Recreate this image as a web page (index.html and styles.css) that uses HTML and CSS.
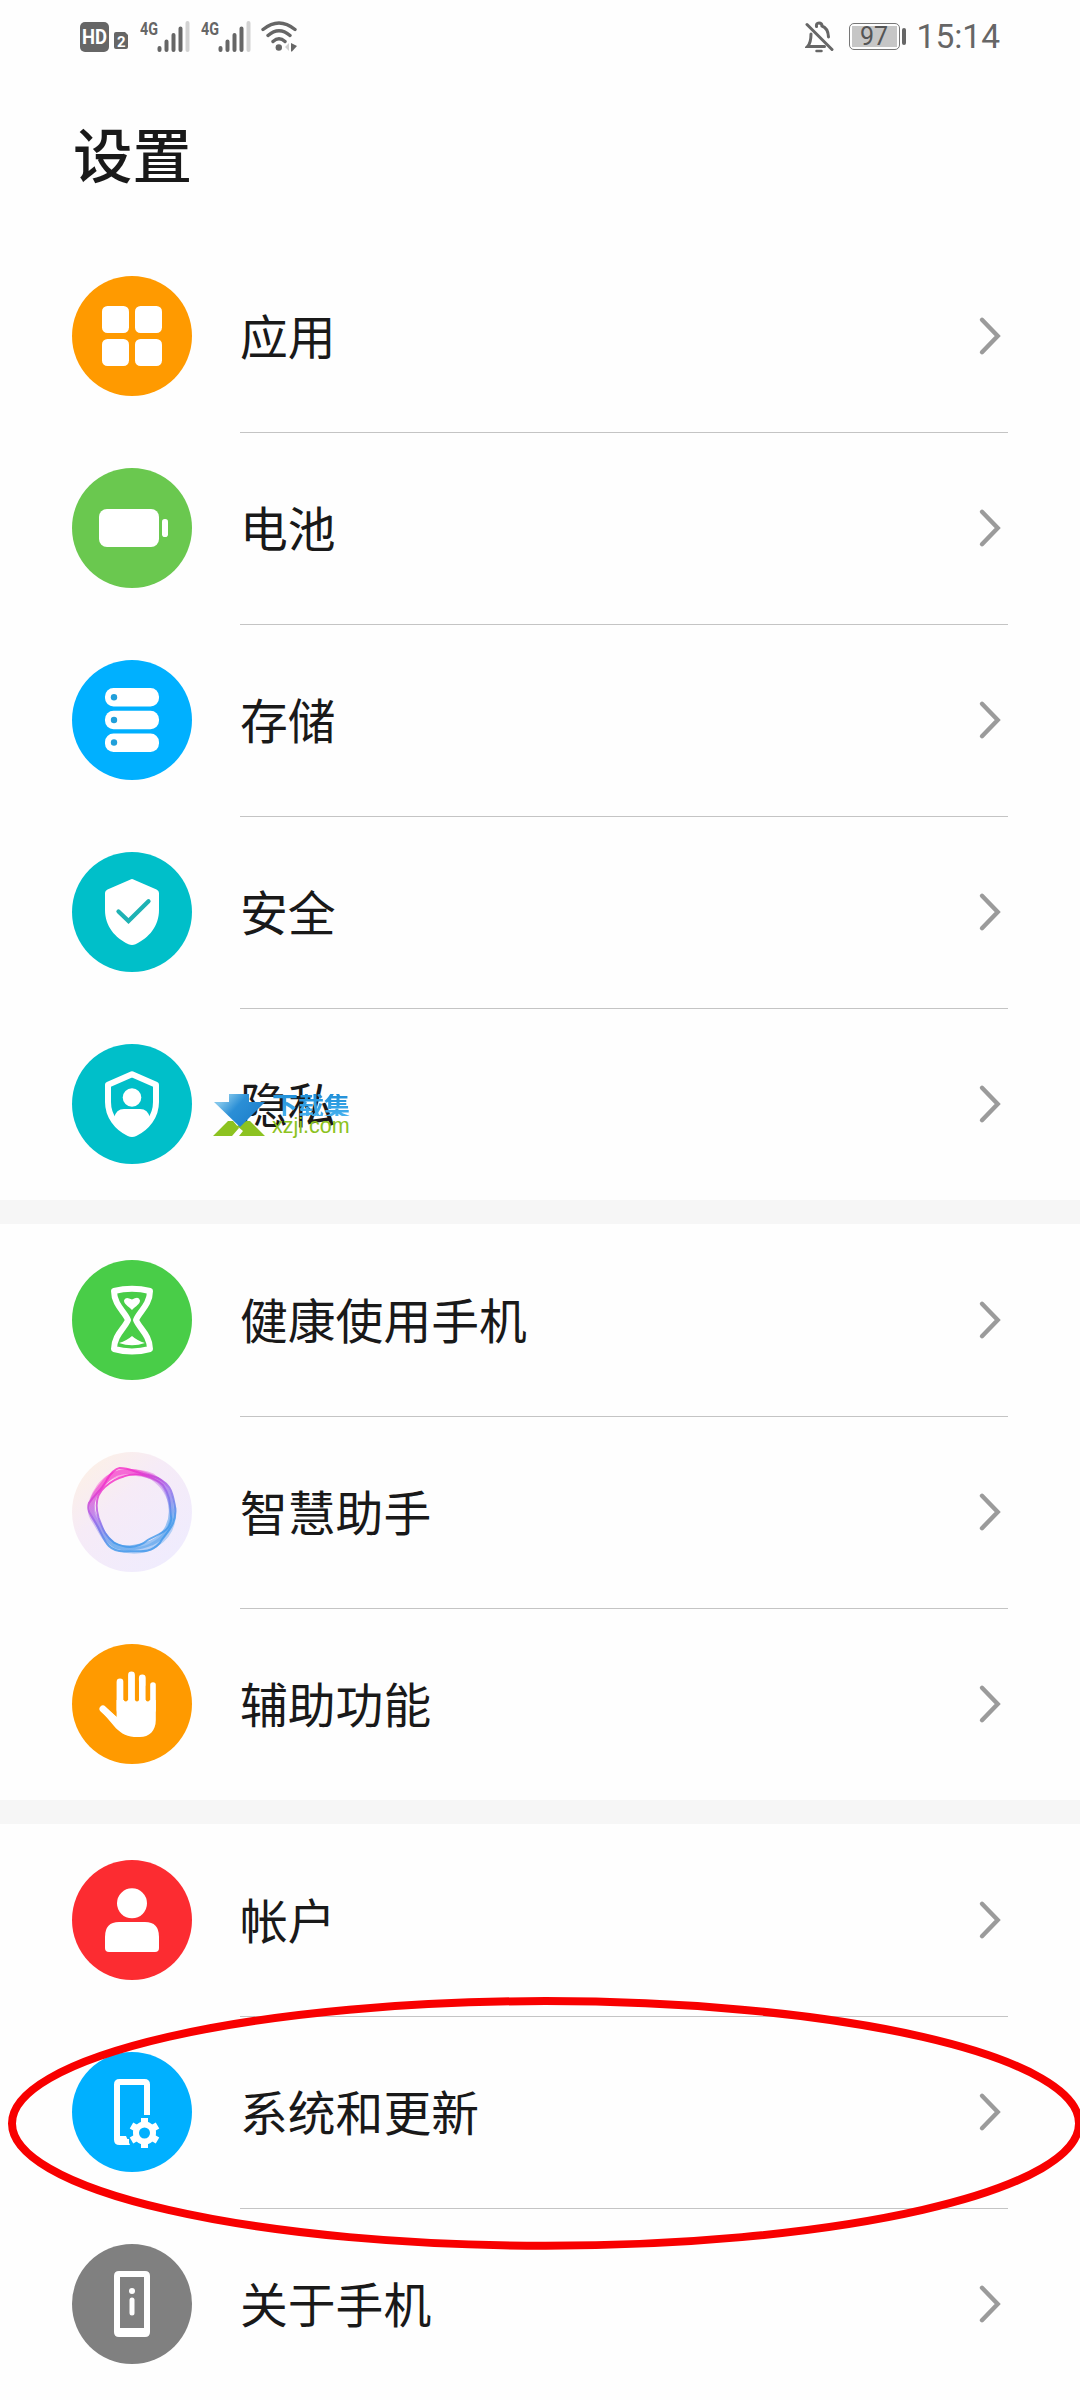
FILE: index.html
```html
<!DOCTYPE html>
<html lang="zh-CN">
<head>
<meta charset="utf-8">
<title>设置</title>
<link rel="stylesheet" href="styles.css">
</head>
<body>
<svg class="defs" width="0" height="0" aria-hidden="true">
  <defs>
    <linearGradient id="ring" x1="0.2" y1="0" x2="0.65" y2="1">
      <stop offset="0.1" stop-color="#f52bc8"/><stop offset="0.45" stop-color="#9a63ea"/><stop offset="0.8" stop-color="#3f97ea"/>
    </linearGradient>
    <linearGradient id="orb" x1="0" y1="0.1" x2="0.8" y2="1">
      <stop offset="0" stop-color="#fdf1e4"/><stop offset="0.4" stop-color="#f6ebf7"/><stop offset="1" stop-color="#efecfe"/>
    </linearGradient>
    <linearGradient id="arrow" x1="0" y1="0" x2="1" y2="0.6">
      <stop offset="0.2" stop-color="#7fc4ea"/><stop offset="0.5" stop-color="#2b8fd6"/><stop offset="1" stop-color="#1d7fcb"/>
    </linearGradient>
    <symbol id="signal" viewBox="0 0 50 32">
      <text class="net" x="0" y="15" textLength="18" lengthAdjust="spacingAndGlyphs">4G</text>
      <path class="bars" d="M19.500 28v2M26.500 21.500v8.500M33.500 15v15M40.500 8.500v21.500"/>
      <path class="bars faint" d="M47.500 3v27"/>
    </symbol>
    <symbol id="chevron" viewBox="0 0 24 40"><path d="M4 3.800 19.700 20 4 36.200" fill="none" stroke="#9b9b9b" stroke-width="4.400" stroke-linecap="round"/></symbol>
  </defs>
</svg>

<header class="status">
  <div class="status-left">
    <svg class="hd" width="50" height="32" viewBox="0 0 50 32">
      <rect x="1" y="2" width="29" height="30" rx="5" fill="#666"/>
      <text x="3" y="24" class="hd-text" textLength="25" lengthAdjust="spacingAndGlyphs">HD</text>
      <path d="M37 12h9l3 3v12a2 2 0 0 1-2 2H37a2 2 0 0 1-2-2V14a2 2 0 0 1 2-2z" fill="#666"/>
      <text x="38" y="27" class="sim-text">2</text>
    </svg>
    <svg class="sig" width="50" height="32"><use href="#signal"/></svg>
    <svg class="sig" width="50" height="32"><use href="#signal"/></svg>
    <svg class="wifi" width="40" height="32" viewBox="0 0 40 32">
      <path d="M3 9.500Q19 -3.500 35 9.500M8 15.500Q19 6 30 15.500M13 21.500Q19 16 25 21.500" fill="none" stroke="#666" stroke-width="3.400" stroke-linecap="round"/>
      <circle cx="18.800" cy="27.500" r="3.200" fill="#666"/>
      <path d="M31 23l6 3-5 5.500h-1z" fill="#666"/><path d="M29 23l-4 4 4 4z" fill="#d0d0d0"/>
    </svg>
  </div>
  <div class="status-right">
    <svg class="bell" width="30" height="34" viewBox="0 0 30 34" fill="none" stroke="#666" stroke-width="3" stroke-linecap="round">
      <path d="M11.500 6.500Q11 3 14 3t3 3q6 2 6.500 11M6 14q0 9-3.500 12.500H19.500"/>
      <path d="M2 4.500 27 29.500"/><path d="M11.500 31h5" stroke-width="2.500"/>
    </svg>
    <div class="battery"><span class="level">97</span></div>
    <time class="clock">15:14</time>
  </div>
</header>

<h1 class="title">设置</h1>

<main>
  <section class="group">
    <a class="row">
      <svg class="icon" viewBox="0 0 120 120"><circle cx="60" cy="60" r="60" fill="#ff9a00"/>
        <g fill="#fff"><rect x="30" y="30" width="27" height="27" rx="5.500"/><rect x="63" y="30" width="27" height="27" rx="5.500"/><rect x="30" y="63" width="27" height="27" rx="5.500"/><rect x="63" y="63" width="27" height="27" rx="5.500"/></g></svg>
      <span class="body"><span class="label">应用</span><svg class="go"><use href="#chevron"/></svg></span>
    </a>
    <a class="row">
      <svg class="icon" viewBox="0 0 120 120"><circle cx="60" cy="60" r="60" fill="#6ac84f"/>
        <rect x="27" y="41" width="60" height="38" rx="8" fill="#fff"/><rect x="90" y="51" width="6" height="18" rx="2.800" fill="#fff"/></svg>
      <span class="body"><span class="label">电池</span><svg class="go"><use href="#chevron"/></svg></span>
    </a>
    <a class="row">
      <svg class="icon" viewBox="0 0 120 120"><circle cx="60" cy="60" r="60" fill="#00b0ff"/>
        <g fill="#fff"><rect x="33" y="28" width="54" height="18.500" rx="8.500"/><rect x="33" y="50.700" width="54" height="18.500" rx="8.500"/><rect x="33" y="73.400" width="54" height="18.500" rx="8.500"/></g>
        <g fill="#209fda"><circle cx="42" cy="37.300" r="3.200"/><circle cx="42" cy="60" r="3.200"/><circle cx="42" cy="82.500" r="3.200"/></g></svg>
      <span class="body"><span class="label">存储</span><svg class="go"><use href="#chevron"/></svg></span>
    </a>
    <a class="row">
      <svg class="icon" viewBox="0 0 120 120"><circle cx="60" cy="60" r="60" fill="#00bfc9"/>
        <path d="M58 27.700Q60 26.500 62 27.700L84.500 37.500Q87 38.500 87 41V58C87 74 77 86 63.500 92.200Q60 93.600 56.500 92.200C43 86 33 74 33 58V41Q33 38.500 35.500 37.500Z" fill="#fff"/>
        <path d="M46.500 59.500 56.500 69 76.500 49.300" fill="none" stroke="#1eb2b4" stroke-width="4.300" stroke-linecap="round"/></svg>
      <span class="body"><span class="label">安全</span><svg class="go"><use href="#chevron"/></svg></span>
    </a>
    <a class="row">
      <svg class="icon" viewBox="0 0 120 120"><circle cx="60" cy="60" r="60" fill="#00bfc9"/>
        <path d="M60 30.300 84 40.700V58C84 72 75 83.500 63 89.200Q60 90.600 57 89.200C45 83.500 36 72 36 58V40.700Z" fill="none" stroke="#fff" stroke-width="6" stroke-linejoin="round"/>
        <circle cx="60" cy="53.500" r="9.300" fill="#fff"/><path d="M42 74Q44 65 52 65H68Q76 65 78 74L79 76 63 90H57L41 76Z" fill="#fff"/></svg>
      <span class="body"><span class="label">隐私</span><svg class="go"><use href="#chevron"/></svg></span>
      <span class="mark">
        <svg width="53" height="44" viewBox="0 0 53 44">
          <path d="M0 42 15 27H20L26 34 19 42ZM26 42 30 37 24 32 33 27H37L52 42Z" fill="#8cc220"/>
          <path d="M16 0H36V8H52L27 33 1 8H16Z" fill="url(#arrow)"/>
        </svg>
        <span class="mark-text"><b>下载集</b><i>xzji.com</i></span>
      </span>
    </a>
  </section>

  <section class="group">
    <a class="row">
      <svg class="icon" viewBox="0 0 120 120"><circle cx="60" cy="60" r="60" fill="#49cd48"/>
        <path d="M42 31Q60 26.500 78 31C78 45 67 52 64 60C67 68 78 75 78 89Q60 94 42 89C42 75 53 68 56 60C53 52 42 45 42 31Z" fill="none" stroke="#fff" stroke-width="6" stroke-linejoin="round"/>
        <path d="M60 50C56 46 52 44 52 40.500Q53 36 60 39.500Q67 35.500 68 40.500C68 44 64 46 60 50ZM47 83Q55 80.500 60 76Q65 80.500 73 83Q60 87.500 47 83Z" fill="#fff"/></svg>
      <span class="body"><span class="label">健康使用手机</span><svg class="go"><use href="#chevron"/></svg></span>
    </a>
    <a class="row">
      <svg class="icon" viewBox="0 0 120 120"><circle cx="60" cy="60" r="60" fill="url(#orb)"/>
        <g fill="none" stroke="url(#ring)" transform="translate(-3 -4) scale(1.055)">
          <path d="M48 19C59 19 63 24 77 26C96 31 98 42 100 53C104 73 91 81 86 90C76 101 66 97 52 98C37 98 34 88 29 78C23 65 16 61 19 52C25 43 31 40 36 30Q42 20 48 19Z" stroke-width="2" opacity=".8"/>
          <path d="M45 24C58 19 72 24 84 30C94 37 96 48 97 58C98 72 90 85 78 90C67 95 53 96 45 93C34 87 29 75 25 66C18 53 24 44 30 37Q37 27 45 24Z" stroke-width="5" opacity=".5"/>
          <path d="M52 27C65 22 80 27 89 35C98 48 95 57 97 67C96 80 83 82 75 87C62 98 49 93 43 90C33 82 32 76 28 66C24 52 27 43 34 37Q43 29 52 27Z" stroke-width="1.800" opacity=".8"/>
          <path d="M40 27C50 22 66 22 79 27C91 36 95 43 99 58C99 72 94 84 82 91C70 99 58 98 48 95C34 90 32 80 24 68C17 58 22 47 29 37Q34 30 40 27Z" stroke-width="6" opacity=".35"/>
        </g></svg>
      <span class="body"><span class="label">智慧助手</span><svg class="go"><use href="#chevron"/></svg></span>
    </a>
    <a class="row">
      <svg class="icon" viewBox="0 0 120 120"><circle cx="60" cy="60" r="60" fill="#ff9a00"/>
        <g stroke="#fff" stroke-linecap="round" fill="none"><path d="M48 38V66M59.500 31V66M70.300 34V66" stroke-width="6.800"/><path d="M81 41V66" stroke-width="5.600"/><path d="M31 65 46 79" stroke-width="7"/></g>
        <path d="M44.600 56H83.800V76C83.800 87 77 93 68 93H62C53 92 47 88 42 82L31 69 34 64 44.600 73Z" fill="#fff"/>
        <path d="M53.800 38V55.500M65 38V55.500M75.800 42V55.500" stroke="#ff9a00" stroke-width="4" stroke-linecap="round"/></svg>
      <span class="body"><span class="label">辅助功能</span><svg class="go"><use href="#chevron"/></svg></span>
    </a>
  </section>

  <section class="group">
    <a class="row">
      <svg class="icon" viewBox="0 0 120 120"><circle cx="60" cy="60" r="60" fill="#fc2c31"/>
        <circle cx="60" cy="43.300" r="15" fill="#fff"/><path d="M33 77Q33 62 47 62H73Q87 62 87 77V88Q87 92 83 92H37Q33 92 33 88Z" fill="#fff"/></svg>
      <span class="body"><span class="label">帐户</span><svg class="go"><use href="#chevron"/></svg></span>
    </a>
    <a class="row">
      <svg class="icon" viewBox="0 0 120 120"><circle cx="60" cy="60" r="60" fill="#00b0ff"/>
        <path d="M75 63V32.500Q75 30 72.500 30H47.500Q45 30 45 32.500V87.500Q45 90 47.500 90H57" fill="none" stroke="#fff" stroke-width="6"/>
        <path d="M48 84H54L58 93H48Z" fill="#fff"/>
        <g fill="#fff" stroke="#fff"><circle cx="72.500" cy="81" r="8.500" fill="none" stroke-width="6"/>
        <path d="M72.500 71V66M72.500 91V96M63.800 76 59.500 73.500M81.200 76 85.500 73.500M63.800 86 59.500 88.500M81.200 86 85.500 88.500" stroke-width="7"/></g></svg>
      <span class="body"><span class="label">系统和更新</span><svg class="go"><use href="#chevron"/></svg></span>
    </a>
    <a class="row">
      <svg class="icon" viewBox="0 0 120 120"><circle cx="60" cy="60" r="60" fill="#808080"/>
        <path fill-rule="evenodd" d="M47 27H73Q78 27 78 32V88Q78 93 73 93H47Q42 93 42 88V32Q42 27 47 27ZM48 33V84H72V33Z" fill="#fff"/>
        <circle cx="60" cy="47" r="3" fill="#fff"/><path d="M60 56V69" stroke="#fff" stroke-width="5" stroke-linecap="round"/></svg>
      <span class="body"><span class="label">关于手机</span><svg class="go"><use href="#chevron"/></svg></span>
    </a>
    <svg class="circled" width="1080" height="262" viewBox="0 0 1080 262"><ellipse cx="545.500" cy="131.400" rx="533.500" ry="122.300" fill="none" stroke="#f80000" stroke-width="8"/></svg>
  </section>
</main>
</body>
</html>
```
FILE: styles.css
```css
* { box-sizing: border-box; }
body {
  margin: 0;
  width: 1080px;
  height: 2400px;
  overflow: hidden;
  background: #fefefe;
  color: #191919;
  font-family: "Noto Sans CJK SC", sans-serif;
  display: flex;
  flex-direction: column;
}
.defs { position: absolute; }

.status {
  height: 72px;
  padding: 20px 80px 0 79px;
  display: flex;
  justify-content: space-between;
  align-items: flex-start;
  font-family: Roboto, sans-serif;
  color: #666;
}
.status-left, .status-right { display: flex; align-items: flex-start; }
.status svg { display: block; }
.sig { margin-left: 11px; }
.sig + .wifi { margin-left: 9px; }
.hd-text { font: 700 20px Roboto, sans-serif; fill: #fff; }
.sim-text { font: 700 15px Roboto, sans-serif; fill: #fff; }
.net { font: 700 19px Roboto, sans-serif; fill: #666; }
.bars { stroke: #666; stroke-width: 4; stroke-linecap: round; fill: none; }
.bars.faint { stroke: #d2d2d2; }
.battery {
  position: relative;
  width: 51px;
  height: 27px;
  margin: 3px 0 0 14px;
  padding: 2px;
  border: 1.500px solid #777;
  border-radius: 5px;
}
.battery::after {
  content: "";
  position: absolute;
  left: 52px;
  top: 4px;
  width: 4px;
  height: 17px;
  border-radius: 2px;
  background: #666;
}
.level {
  display: block;
  height: 100%;
  background: #c6c6c6;
  font-size: 25px;
  line-height: 21px;
  text-align: center;
  color: #555;
}
.clock { margin-left: 17px; font-size: 33.500px; line-height: 34px; }

.title {
  height: 168px;
  margin: 0;
  padding: 36px 73px 0;
  font-size: 59.500px;
  line-height: 88px;
  font-weight: 500;
}

main, .group { display: flex; flex-direction: column; }
main { gap: 24px; background: #f6f6f6; }
.group { position: relative; background: #fefefe; }
.row {
  position: relative;
  height: 192px;
  padding: 0 72px;
  display: flex;
  align-items: center;
  gap: 48px;
}
.icon { width: 120px; height: 120px; flex: none; }
.body {
  flex: 1;
  height: 100%;
  display: flex;
  align-items: center;
  justify-content: space-between;
}
.label { padding-bottom: 2px; font-size: 47.800px; line-height: 72px; }
.row + .row .body { box-shadow: inset 0 1px #c4c4c4; }
.go { width: 24px; height: 40px; margin-right: 6px; }

.mark { position: absolute; left: 213px; top: 86px; display: flex; }
.mark-text { display: flex; flex-direction: column; margin-left: 6px; }
.mark-text b {
  font-size: 26px;
  line-height: 22px;
  font-weight: 700;
  background: linear-gradient(#1f8fd8, #45b0ee);
  -webkit-background-clip: text;
  background-clip: text;
  color: transparent;
}
.mark-text i {
  font: 21.500px/20px "Liberation Sans", sans-serif;
  color: #8cc220;
}
.circled { position: absolute; left: 0; top: 168px; }
```
